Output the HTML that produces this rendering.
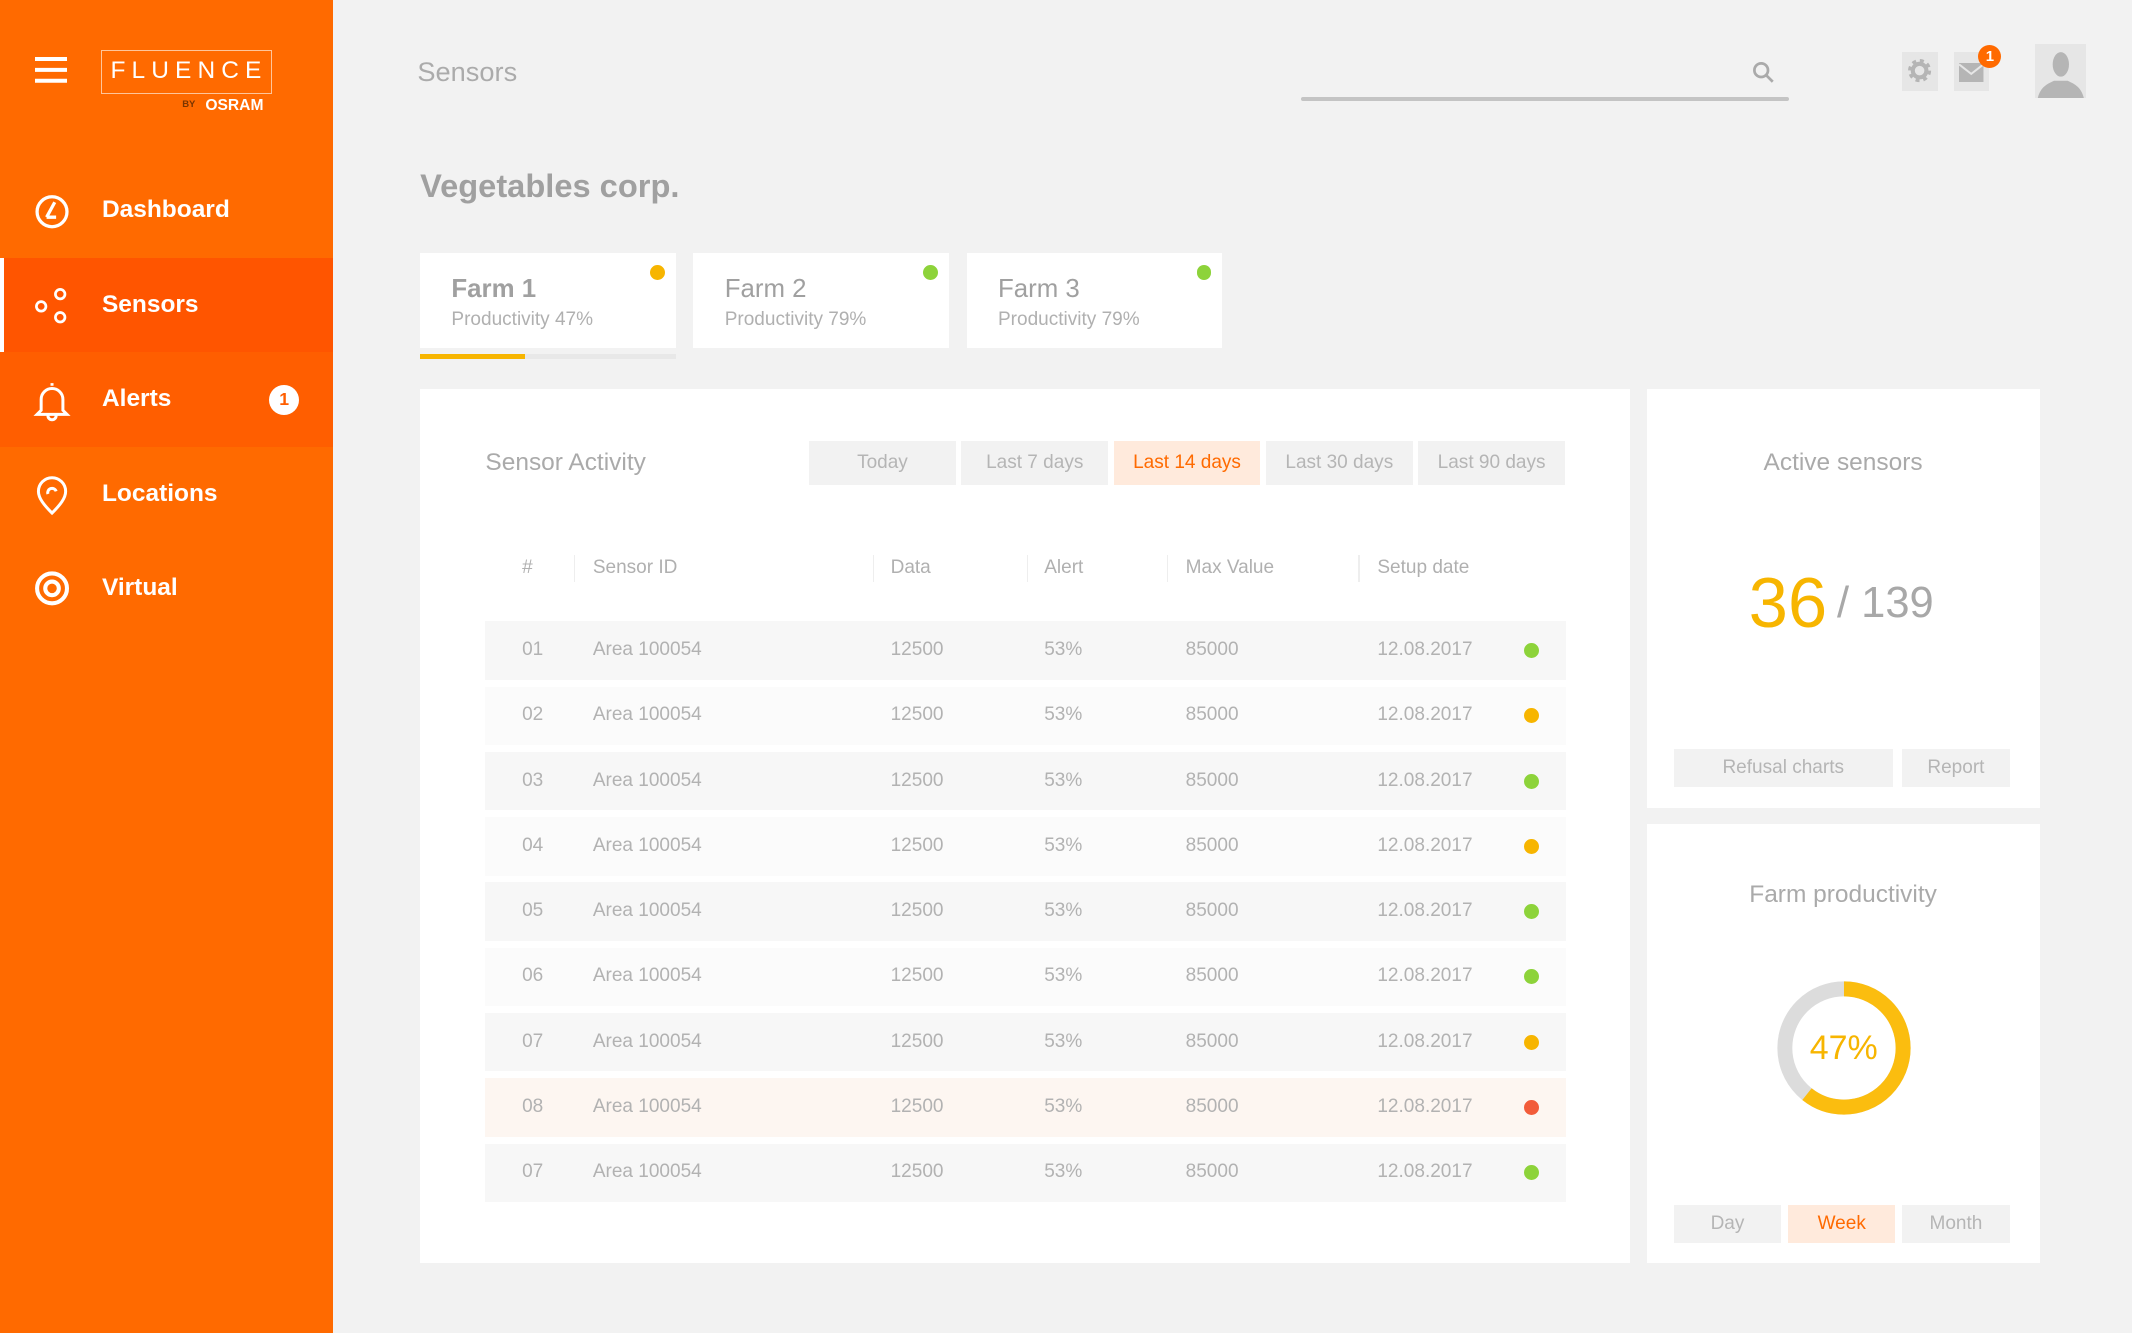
<!DOCTYPE html>
<html><head><meta charset="utf-8"><style>
*{box-sizing:border-box;margin:0;padding:0}
html,body{width:2132px;height:1333px;overflow:hidden;background:#f2f2f2}
#s{zoom:1.3597;width:1568px;height:980px;position:relative;font-family:"Liberation Sans",sans-serif;color:#a6a6a6}
.a{position:absolute}
.sb{left:0;top:0;width:245px;height:980px;background:#ff6a00}
.nav{left:0;width:245px;height:70px;color:#fff;font-weight:bold;font-size:18px}
.nav span{position:absolute;left:75px;top:24px}
.nav svg{position:absolute;left:24px;top:20px}
.card{background:#fff}
.farm{background:#fff;width:188px;height:70px}
.farm b{position:absolute;left:23px;top:16px;font-size:19px;color:#a0a0a0}
.farm i{font-style:normal;position:absolute;left:23px;top:41px;font-size:14px;color:#b0b0b0}
.dot{width:11px;height:11px;border-radius:50%}
.btn{background:#f2f2f2;height:33px;line-height:33px;text-align:center;font-size:14px;color:#b5b5b5}
.row{left:357px;width:795px;height:43px;font-size:14px;color:#b2b2b2}
.row span{position:absolute;top:13px}
.hd{position:absolute;top:410px;font-size:14px;color:#b0b0b0}
.sep{position:absolute;top:408px;width:1px;height:20px;background:#eee}
</style></head><body><div id="s">
<div class="a sb"></div>
<div class="a" style="left:26px;top:42px;width:23px;height:3px;background:#fff;box-shadow:0 8px #fff,0 16px #fff"></div>
<div class="a" style="left:74px;top:37px;width:126px;height:32px;border:1px solid #ffc59a;color:#fff;font-size:18px;letter-spacing:4.5px;text-align:center;line-height:30px;padding-left:4px;overflow:hidden;white-space:nowrap">FLUENCE</div>
<div class="a" style="left:134px;top:73px;font-size:7px;color:#7a3500;font-weight:bold">BY</div>
<div class="a" style="left:151px;top:71px;font-size:11.5px;color:#fff;font-weight:bold">OSRAM</div>
<div class="a nav" style="top:120px"><svg width="28" height="30" viewBox="0 0 28 30" fill="none" stroke="#fff" stroke-width="2.4"><circle cx="14" cy="16" r="11"/><path d="M10 20h7M10 20l6-11"/></svg><span>Dashboard</span></div>
<div class="a nav" style="top:190px;background:#ff5500"><div class="a" style="left:0;top:0;width:3px;height:70px;background:#fff"></div><svg width="28" height="30" viewBox="0 0 28 30" fill="none" stroke="#fff" stroke-width="2"><circle cx="6" cy="15" r="3.5"/><circle cx="20" cy="6" r="3.5"/><circle cx="20" cy="23" r="3.5"/></svg><span>Sensors</span></div>
<div class="a nav" style="top:259px;background:#ff5e00"><svg width="28" height="32" viewBox="0 0 28 32" fill="none" stroke="#fff" stroke-width="2.2"><path d="M14 3v2M6 23v-8a8 8 0 0116 0v8l3 3H3zM11 27a3 3 0 006 0"/></svg><span>Alerts</span><div class="a" style="left:198px;top:24px;width:22px;height:22px;border-radius:50%;background:#fff;color:#ff5e00;font-size:13px;text-align:center;line-height:22px">1</div></div>
<div class="a nav" style="top:329px"><svg width="28" height="32" viewBox="0 0 28 32" fill="none" stroke="#fff" stroke-width="2.2"><path d="M14 28C8 22 4 17 4 12a10 10 0 0120 0c0 5-4 10-10 16z"/><path d="M11 14a3 3 0 116 -2"/></svg><span>Locations</span></div>
<div class="a nav" style="top:398px"><svg width="28" height="30" viewBox="0 0 28 30" fill="none" stroke="#fff" stroke-width="3"><circle cx="14" cy="15" r="11"/><circle cx="14" cy="15" r="5"/></svg><span>Virtual</span></div>

<div class="a" style="left:307px;top:41px;font-size:20px;color:#ababab">Sensors</div>
<div class="a" style="left:957px;top:71px;width:359px;height:3px;background:#c4c4c4;border-radius:2px"></div>
<svg class="a" style="left:1288px;top:44px" width="18" height="18" viewBox="0 0 18 18" fill="none" stroke="#aaa" stroke-width="2"><circle cx="7.5" cy="7.5" r="5"/><path d="M11 11l5 5"/></svg>
<div class="a" style="left:1399px;top:38px;width:26px;height:29px;background:#e6e6e6"></div>
<svg class="a" style="left:1402px;top:42px" width="20" height="20" viewBox="0 0 20 20"><circle cx="10" cy="10" r="6.5" fill="none" stroke="#b5b5b5" stroke-width="4" stroke-dasharray="2.6 2.5"/><circle cx="10" cy="10" r="5" fill="none" stroke="#b5b5b5" stroke-width="3"/></svg>
<div class="a" style="left:1437px;top:38px;width:26px;height:29px;background:#e6e6e6"></div>
<svg class="a" style="left:1441px;top:46px" width="18" height="14" viewBox="0 0 18 14"><rect width="18" height="14" fill="#b5b5b5"/><path d="M0 1l9 7 9-7" fill="none" stroke="#e6e6e6" stroke-width="1.5"/></svg>
<div class="a" style="left:1455px;top:33px;width:17px;height:17px;border-radius:50%;background:#ff6a00;color:#fff;font-size:11px;font-weight:bold;text-align:center;line-height:17px">1</div>
<div class="a" style="left:1497px;top:32px;width:37px;height:40px;background:#e6e6e6;overflow:hidden"><svg width="37" height="40" viewBox="0 0 37 40"><ellipse cx="19" cy="15" rx="6" ry="9" fill="#b5b5b5"/><path d="M2 40c2-9 8-11 12-13h10c4 2 10 4 12 13z" fill="#b5b5b5"/></svg></div>

<div class="a" style="left:309px;top:123px;font-size:24px;font-weight:bold;color:#a0a0a0">Vegetables corp.</div>

<div class="a farm" style="left:309px;top:186px"><b>Farm 1</b><i>Productivity 47%</i><div class="a dot" style="left:169px;top:9px;background:#f7b500"></div></div>
<div class="a" style="left:309px;top:260px;width:188px;height:4px;background:#e8e8e8"><div style="width:77px;height:4px;background:#f7b500"></div></div>
<div class="a farm" style="left:510px;top:186px"><b style="font-weight:normal">Farm 2</b><i>Productivity 79%</i><div class="a dot" style="left:169px;top:9px;background:#8dd33a"></div></div>
<div class="a farm" style="left:711px;top:186px"><b style="font-weight:normal">Farm 3</b><i>Productivity 79%</i><div class="a dot" style="left:169px;top:9px;background:#8dd33a"></div></div>

<div class="a card" style="left:309px;top:286px;width:890px;height:643px"></div>
<div class="a" style="left:357px;top:330px;font-size:18px;color:#aaa">Sensor Activity</div>
<div class="a btn" style="left:595px;top:324px;width:108px">Today</div>
<div class="a btn" style="left:707px;top:324px;width:108px">Last 7 days</div>
<div class="a btn" style="left:819px;top:324px;width:108px;background:#ffeadc;color:#ff6a00">Last 14 days</div>
<div class="a btn" style="left:931px;top:324px;width:108px">Last 30 days</div>
<div class="a btn" style="left:1043px;top:324px;width:108px">Last 90 days</div>

<div class="hd" style="left:384px">#</div><div class="sep" style="left:422px"></div>
<div class="hd" style="left:436px">Sensor ID</div><div class="sep" style="left:642px"></div>
<div class="hd" style="left:655px">Data</div><div class="sep" style="left:755px"></div>
<div class="hd" style="left:768px">Alert</div><div class="sep" style="left:858px"></div>
<div class="hd" style="left:872px">Max Value</div><div class="sep" style="left:999px"></div>
<div class="hd" style="left:1013px">Setup date</div>

<div id="rows"></div>
<script>
var d=[["01","#8dd33a","#f7f7f7"],["02","#f7b500","#fbfbfb"],["03","#8dd33a","#f7f7f7"],["04","#f7b500","#fbfbfb"],["05","#8dd33a","#f7f7f7"],["06","#8dd33a","#fbfbfb"],["07","#f7b500","#f7f7f7"],["08","#f25c3a","#fdf6f1"],["07","#8dd33a","#f7f7f7"]];
var h="";d.forEach(function(r,i){var t=457+i*48;h+='<div class="a row" style="top:'+t+'px;background:'+r[2]+'"><span style="left:27px">'+r[0]+'</span><span style="left:79px">Area 100054</span><span style="left:298px">12500</span><span style="left:411px">53%</span><span style="left:515px">85000</span><span style="left:656px">12.08.2017</span><div class="a dot" style="left:764px;top:16px;background:'+r[1]+'"></div></div>';});
document.getElementById("rows").innerHTML=h;
</script>

<div class="a card" style="left:1211px;top:286px;width:289px;height:308px"></div>
<div class="a" style="left:1211px;top:330px;width:289px;text-align:center;font-size:18px;color:#aaa">Active sensors</div>
<div class="a" style="left:1286px;top:413px;font-size:52px;color:#f7b500">36</div>
<div class="a" style="left:1351px;top:426px;font-size:32px;color:#a8a8a8">/ 139</div>
<div class="a btn" style="left:1231px;top:551px;width:161px;height:28px;line-height:28px">Refusal charts</div>
<div class="a btn" style="left:1399px;top:551px;width:79px;height:28px;line-height:28px">Report</div>

<div class="a card" style="left:1211px;top:606px;width:289px;height:323px"></div>
<div class="a" style="left:1211px;top:648px;width:289px;text-align:center;font-size:18px;color:#aaa">Farm productivity</div>
<svg class="a" style="left:1306px;top:721px" width="100" height="100" viewBox="0 0 100 100"><circle cx="50" cy="50" r="43.5" fill="none" stroke="#dcdcdc" stroke-width="11"/><circle cx="50" cy="50" r="43.5" fill="none" stroke="#fbbd0f" stroke-width="11" stroke-dasharray="166 300" transform="rotate(-90 50 50)"/></svg>
<div class="a" style="left:1306px;top:757px;width:100px;text-align:center;font-size:25px;color:#f7b500">47%</div>
<div class="a btn" style="left:1231px;top:886px;width:79px;height:28px;line-height:28px">Day</div>
<div class="a btn" style="left:1315px;top:886px;width:79px;height:28px;line-height:28px;background:#ffeadc;color:#ff6a00">Week</div>
<div class="a btn" style="left:1399px;top:886px;width:79px;height:28px;line-height:28px">Month</div>
</div></body></html>
